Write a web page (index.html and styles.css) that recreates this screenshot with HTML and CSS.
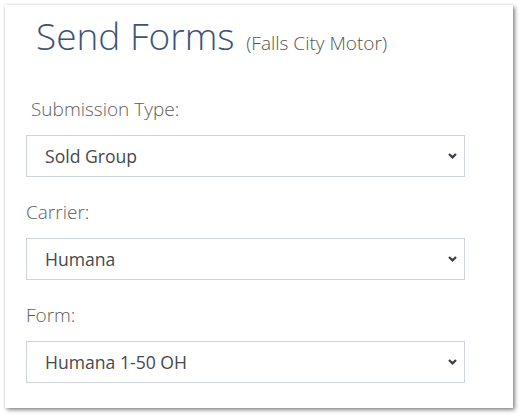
FILE: index.html
```html
<!DOCTYPE html>
<html>
<head>
<meta charset="utf-8">
<link rel="stylesheet" href="styles.css">
</head>
<body>
<div class="card">
  <h1 class="title">Send Forms <small class="subtitle">(Falls City Motor)</small></h1>
  <div class="field first">
    <label class="label indent">Submission Type:</label>
    <div class="select-wrap">
      <select class="select"><option>Sold Group</option></select>
      <svg class="chev" viewBox="0 0 9 6" width="9" height="6"><path d="M1 1 L4.5 4.4 L8 1" fill="none" stroke="#3a3f45" stroke-width="2.2"/></svg>
    </div>
  </div>
  <div class="field">
    <label class="label">Carrier:</label>
    <div class="select-wrap">
      <select class="select"><option>Humana</option></select>
      <svg class="chev" viewBox="0 0 9 6" width="9" height="6"><path d="M1 1 L4.5 4.4 L8 1" fill="none" stroke="#3a3f45" stroke-width="2.2"/></svg>
    </div>
  </div>
  <div class="field">
    <label class="label">Form:</label>
    <div class="select-wrap">
      <select class="select"><option>Humana 1-50 OH</option></select>
      <svg class="chev" viewBox="0 0 9 6" width="9" height="6"><path d="M1 1 L4.5 4.4 L8 1" fill="none" stroke="#3a3f45" stroke-width="2.2"/></svg>
    </div>
  </div>
</div>
</body>
</html>
```
FILE: styles.css
```css
html, body {
  margin: 0;
  padding: 0;
  background: #ffffff;
}
body {
  font-family: "Open Sans", "Liberation Sans", sans-serif;
  padding: 5px 0 11px 5px;
  min-height: 419px;
  box-sizing: border-box;
}
.card {
  width: 508px;
  height: 403px;
  box-sizing: border-box;
  padding: 9px 48px 0 21px;
  background: #fff;
  box-shadow: 2px 2px 4px rgba(0, 0, 0, 0.45), 0 0 3px rgba(0, 0, 0, 0.12);
}
.title {
  margin: 0 0 0 10px;
  font-size: 37px;
  font-weight: 300;
  line-height: 43px;
  color: #3e5477;
}
.subtitle {
  margin-left: 2px;
  font-size: 19px;
  font-weight: 300;
  color: #555;
}
.field {
  display: flex;
  flex-direction: column;
  gap: 12px;
  margin-top: 22px;
}
.field.first {
  margin-top: 31px;
}
.label {
  font-size: 19px;
  font-weight: 300;
  line-height: 27px;
  color: #5e5e5e;
}
.label.indent {
  margin-left: 5px;
}
.select-wrap {
  position: relative;
  width: 439px;
}
.select {
  display: block;
  width: 100%;
  height: 42px;
  box-sizing: border-box;
  appearance: none;
  -webkit-appearance: none;
  border: 1px solid #ced4da;
  border-radius: 0;
  background: #fff;
  padding: 0 30px 0 18px;
  font-family: "Open Sans", "Liberation Sans", sans-serif;
  font-size: 17.6px;
  color: #484848;
}
.chev {
  position: absolute;
  right: 8px;
  top: 18px;
}
```
